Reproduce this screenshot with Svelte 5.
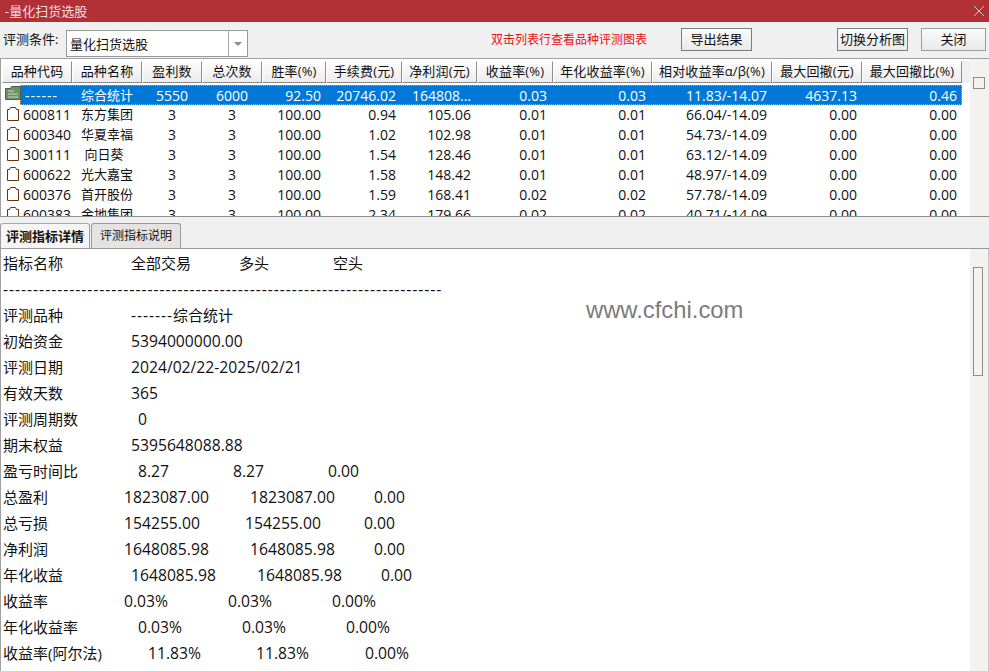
<script>
	const columns = [
		{ label: "品种代码", width: 70 },
		{ label: "品种名称", width: 70 },
		{ label: "盈利数", width: 60 },
		{ label: "总次数", width: 60 },
		{ label: "胜率(%)", width: 64 },
		{ label: "手续费(元)", width: 76 },
		{ label: "净利润(元)", width: 75 },
		{ label: "收益率(%)", width: 76 },
		{ label: "年化收益率(%)", width: 99 },
		{ label: "相对收益率α/β(%)", width: 120 },
		{ label: "最大回撤(元)", width: 90 },
		{ label: "最大回撤比(%)", width: 100 }
	];

	const rows = [
		["------", "综合统计", "5550", "6000", "92.50", "20746.02", "164808...", "0.03", "0.03", "11.83/-14.07", "4637.13", "0.46"],
		["600811", "东方集团", "3", "3", "100.00", "0.94", "105.06", "0.01", "0.01", "66.04/-14.09", "0.00", "0.00"],
		["600340", "华夏幸福", "3", "3", "100.00", "1.02", "102.98", "0.01", "0.01", "54.73/-14.09", "0.00", "0.00"],
		["300111", " 向日葵", "3", "3", "100.00", "1.54", "128.46", "0.01", "0.01", "63.12/-14.09", "0.00", "0.00"],
		["600622", "光大嘉宝", "3", "3", "100.00", "1.58", "148.42", "0.01", "0.01", "48.97/-14.09", "0.00", "0.00"],
		["600376", "首开股份", "3", "3", "100.00", "1.59", "168.41", "0.02", "0.02", "57.78/-14.09", "0.00", "0.00"],
		["600383", "金地集团", "3", "3", "100.00", "2.34", "179.66", "0.02", "0.02", "40.71/-14.09", "0.00", "0.00"]
	];

	// 每行: 标题, 然后是各列的 [起始x, 文字]
	const details = [
		["指标名称", [131, "全部交易"], [239, "多头"], [333, "空头"]],
		["", [3, "-".repeat(73)]],
		["评测品种", [131, "-------"], [173, "综合统计"]],
		["初始资金", [131, "5394000000.00"]],
		["评测日期", [131, "2024/02/22-2025/02/21"]],
		["有效天数", [131, "365"]],
		["评测周期数", [138, "0"]],
		["期末权益", [131, "5395648088.88"]],
		["盈亏时间比", [138, "8.27"], [233, "8.27"], [328, "0.00"]],
		["总盈利", [124, "1823087.00"], [250, "1823087.00"], [374, "0.00"]],
		["总亏损", [124, "154255.00"], [245, "154255.00"], [364, "0.00"]],
		["净利润", [124, "1648085.98"], [250, "1648085.98"], [374, "0.00"]],
		["年化收益", [131, "1648085.98"], [257, "1648085.98"], [381, "0.00"]],
		["收益率", [124, "0.03%"], [228, "0.03%"], [332, "0.00%"]],
		["年化收益率", [138, "0.03%"], [242, "0.03%"], [346, "0.00%"]],
		["收益率(阿尔法)", [148, "11.83%"], [256, "11.83%"], [365, "0.00%"]]
	];

	const isDash = (s) => /^-+$/.test(s);
	const isNum = (s) => /^[\d./%-]+$/.test(s);
</script>

<div class="window">
	<div class="titlebar">
		<span>-量化扫货选股</span>
		<svg class="close" width="12" height="12" viewBox="0 0 12 12">
			<path d="M1 1 L11 11 M11 1 L1 11" stroke="#e9c9ca" stroke-width="1" fill="none" />
		</svg>
	</div>

	<div class="toolbar">
		<label for="cond">评测条件:</label>
		<div class="combo" id="cond">
			<span class="combo-text">量化扫货选股</span>
			<span class="combo-arrow"><i></i></span>
		</div>
		<span class="hint">双击列表行查看品种评测图表</span>
		<button class="export">导出结果</button>
		<button class="switch">切换分析图</button>
		<button class="quit">关闭</button>
	</div>

	<div class="list">
		<div class="list-main">
			<div class="head">
				{#each columns as col}
					<div class="head-cell" style="width: {col.width}px">{col.label}</div>
				{/each}
			</div>
			<div class="body">
				{#each rows as row, r}
					<div class="row" class:selected={r === 0}>
						{#if r === 0}
							<svg class="ico-main" width="16" height="14" viewBox="0 0 16 14">
								<path d="M0.5 2.5h5l1-2h9v13h-15z" fill="#6f9065" stroke="#4f5f4a" />
								<path d="M3 5h6M3 8h10M3 11h10" stroke="#c7dabb" />
							</svg>
						{:else}
							<svg class="ico" width="12" height="14" viewBox="0 0 12 14">
								<path d="M0.5 2.5h2l1-2h5l1 2h2v11h-11z" fill="#fff" stroke="#6e3206" />
							</svg>
						{/if}
						{#each row as val, c}
							<div class="cell c{c}" style="width: {columns[c].width - (c === 0 ? 20 : 0)}px"><span>{val}</span></div>
						{/each}
					</div>
				{/each}
			</div>
		</div>
		<div class="list-side"><div class="check"></div></div>
	</div>

	<div class="tabs">
		<div class="tab active">评测指标详情</div>
		<div class="tab">评测指标说明</div>
	</div>

	<div class="detail">
		<div class="detail-text">
			{#each details as line}
				<div class="line">
					<span class="name">{line[0]}</span>
					{#each line.slice(1) as part}
						<span class="part" class:dash={isDash(part[1])} class:num={isNum(part[1])} style="left: {part[0]}px">{part[1]}</span>
					{/each}
				</div>
			{/each}
			<div class="watermark">www.cfchi.com</div>
		</div>
		<div class="scroll"><div class="thumb"></div></div>
	</div>
</div>

<style>
	:global(body) {
		margin: 0;
		background: #f0f0f0;
	}

	.window {
		width: 989px;
		height: 671px;
		overflow: hidden;
		display: flex;
		flex-direction: column;
		font-family: "Open Sans", "Noto Sans CJK SC", sans-serif;
		font-size: 13px;
		color: #111;
		background: #f0f0f0;
	}

	.titlebar {
		height: 22px;
		flex: none;
		background: #b03036;
		color: #f4dfe0;
		font-size: 13px;
		line-height: 22px;
		padding-left: 5px;
		display: flex;
		justify-content: space-between;
		align-items: center;
	}

	.close {
		margin-right: 4px;
	}

	.toolbar {
		height: 36px;
		flex: none;
		display: flex;
		align-items: flex-start;
		background: #f0f0f0;
	}

	.toolbar label {
		margin: 8px 0 0 3px;
		width: 63px;
		line-height: 18px;
	}

	.combo {
		margin-top: 8px;
		width: 182px;
		height: 27px;
		box-sizing: border-box;
		border: 1px solid #9a9a9a;
		background: #fff;
		display: flex;
		justify-content: space-between;
	}

	.combo-text {
		padding-left: 3px;
		line-height: 26px;
	}

	.combo-arrow {
		width: 18px;
		border-left: 1px solid #a8a8a8;
		display: flex;
		align-items: center;
		justify-content: center;
	}

	.combo-arrow i {
		border-left: 4px solid transparent;
		border-right: 4px solid transparent;
		border-top: 4px solid #8c8c8c;
	}

	.hint {
		margin: 9px 0 0 243px;
		width: 190px;
		color: #e81212;
		font-size: 12px;
		line-height: 18px;
		white-space: nowrap;
	}

	button {
		margin-top: 6px;
		height: 23px;
		padding: 0;
		box-sizing: border-box;
		border: 1px solid #7c7c7c;
		background: linear-gradient(#fbfbfb, #e9e9e9);
		font: inherit;
		color: #111;
		line-height: 19px;
	}

	.export {
		width: 71px;
	}

	.switch {
		margin-left: 85px;
		width: 71px;
	}

	.quit {
		margin-left: 13px;
		width: 65px;
		border-color: #9c9c9c;
	}

	.list {
		height: 157px;
		flex: none;
		display: flex;
		border-top: 1px solid #a0a0a0;
		border-bottom: 1px solid #8f8f8f;
		border-left: 1px solid #a0a0a0;
	}

	.list-main {
		width: 969px;
		padding-left: 1px;
		box-sizing: border-box;
		background: #fff;
		overflow: hidden;
	}

	.list-side {
		flex: 1;
		background: #f3f2f1;
	}

	.check {
		width: 10px;
		height: 10px;
		margin: 18px 0 0 3px;
		border: 1px solid #8e8e8e;
	}

	.head {
		display: flex;
		height: 22px;
		margin-top: 2px;
		background: #f0f0f0;
		width: 968px;
	}

	.head-cell {
		box-sizing: border-box;
		flex: none;
		height: 22px;
		border: 1px solid #fff;
		border-right-color: #8d8d8d;
		border-bottom-color: #8d8d8d;
		background: linear-gradient(#fdfdfd, #ececec);
		text-align: center;
		font-size: 13px;
		letter-spacing: 0.15px;
		line-height: 19px;
		white-space: nowrap;
	}

	.body {
		margin-top: 2px;
		overflow: hidden;
		height: 131px;
	}

	.row {
		display: flex;
		align-items: center;
		height: 20px;
		line-height: 19px;
		position: relative;
		padding-left: 20px;
	}

	.row:not(.selected) .cell {
		margin-top: -2px;
	}

	.row.selected {
		width: 940px;
		box-sizing: content-box;
		padding-left: 2px;
		margin-left: 18px;
		background: #0078d7;
		color: #fff;
		outline: 1px dotted #e8a33c;
		outline-offset: -1px;
	}

	.row.selected .c0 {
		padding-left: 3px;
		letter-spacing: 1px;
	}

	.ico {
		position: absolute;
		left: 5px;
		top: 2px;
	}

	.ico-main {
		position: absolute;
		left: -15px;
		top: 1px;
	}

	.cell {
		flex: none;
		box-sizing: border-box;
		text-align: right;
		padding-right: 5px;
		font-size: 14px;
		white-space: nowrap;
	}

	.cell span {
		white-space: pre;
	}

	.c0 {
		text-align: left;
		padding: 0 0 0 1px;
	}

	.c1 {
		text-align: left;
		padding-left: 9px;
		font-size: 13px;
	}

	.c2, .c3 {
		text-align: center;
		padding: 0;
	}

	.c5, .c6, .c7, .c8 {
		padding-right: 6px;
	}

	.tabs {
		height: 32px;
		flex: none;
		display: flex;
		align-items: flex-end;
		background: #f0f0f0;
		border-bottom: 1px solid #9a9a9a;
		box-sizing: border-box;
	}

	.tab {
		height: 25px;
		box-sizing: border-box;
		width: 90px;
		margin-right: 1px;
		border: 1px solid #9a9a9a;
		border-bottom: 0;
		border-radius: 3px 3px 0 0;
		background: #e4e3e1;
		text-align: center;
		font-size: 12px;
		line-height: 24px;
		white-space: nowrap;
	}

	.tab.active {
		background: #f5f5f4;
		font-weight: 700;
		font-size: 13px;
		border-top-color: #aaa;
	}

	.detail {
		flex: 1;
		display: flex;
		background: #fff;
		min-height: 0;
		border-left: 1px solid #a0a0a0;
	}

	.detail-text {
		position: relative;
		width: 969px;
		padding-top: 1px;
	}

	.line {
		position: relative;
		height: 26px;
		line-height: 26px;
		font-size: 15px;
		white-space: pre;
		padding-left: 2px;
	}

	.part {
		position: absolute;
		top: 0;
		margin-left: -1px;
	}

	.num {
		font-size: 15.7px;
	}

	.dash {
		letter-spacing: 0.97px;
	}

	.watermark {
		position: absolute;
		left: 585px;
		top: 46px;
		font-family: "Liberation Sans", sans-serif;
		font-size: 23.8px;
		line-height: 30px;
		color: #7c7c7c;
	}

	.scroll {
		flex: 1;
		background: #f3f2f1;
		border-right: 1px solid #c8c8c8;
		padding: 18px 0 0 3px;
	}

	.thumb {
		width: 8px;
		height: 107px;
		border: 1px solid #8e8e8e;
	}
</style>
